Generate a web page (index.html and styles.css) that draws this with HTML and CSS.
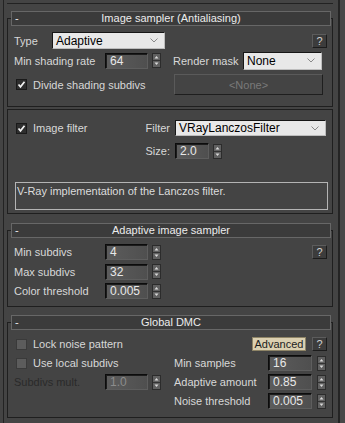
FILE: index.html
```html
<!DOCTYPE html>
<html lang="en">

<head>
    <meta charset="UTF-8">
    <title>V-Ray Sampler Settings</title>
    <link rel="stylesheet" href="styles.css">
</head>

<body>
    <div class="window">
        <div class="panels">
            <div class="stub"></div>

            <!-- Image sampler -->
            <section class="rollout r1">
                <div class="rollout-head"><span class="minus">-</span><span class="title">Image sampler (Antialiasing)</span><span class="minus"></span></div>
                <div class="body b1">
                    <div class="row row-a">
                        <span class="label lbl-type">Type</span>
                        <div class="select sel-type"><span>Adaptive</span><svg class="chev" width="8" height="5" viewBox="0 0 8 5"><path d="M0.5 0.5 L4 4 L7.5 0.5" fill="none" stroke="#8a8a8a" stroke-width="1"/></svg></div>
                        <button class="help">?</button>
                    </div>
                    <div class="row row-b">
                        <span class="label lbl-main">Min shading rate</span>
                        <div class="spin">
                            <div class="spin-input">64</div>
                            <svg class="spin-arrows" width="9" height="15" viewBox="0 0 9 15"><rect x="0.5" y="0.5" width="8" height="14" fill="#606060" stroke="#2c2c2c"/><line x1="1" y1="7.5" x2="8" y2="7.5" stroke="#333"/><path d="M2.5 5.5 L4.5 3 L6.5 5.5 Z" fill="#dadada"/><path d="M2.5 9.5 L4.5 12 L6.5 9.5 Z" fill="#dadada"/></svg>
                        </div>
                        <span class="label lbl-mask">Render mask</span>
                        <div class="select sel-mask"><span>None</span><svg class="chev" width="8" height="5" viewBox="0 0 8 5"><path d="M0.5 0.5 L4 4 L7.5 0.5" fill="none" stroke="#8a8a8a" stroke-width="1"/></svg></div>
                    </div>
                    <div class="row row-c">
                        <label class="check-group cg-wide">
                            <svg class="check" width="11" height="11" viewBox="0 0 11 11"><rect x="0.5" y="0.5" width="10" height="10" fill="#2e2e2e" stroke="#1a1a1a"/><path d="M2.5 5.5 L4.5 7.8 L8.5 2.8" fill="none" stroke="#f2f2f2" stroke-width="1.7"/></svg>
                            <span>Divide shading subdivs</span>
                        </label>
                        <button class="none-btn">&lt;None&gt;</button>
                    </div>
                </div>
            </section>

            <!-- Image filter -->
            <section class="rollout r-filter">
                <div class="body b-filter">
                    <div class="row row-16">
                        <div class="filter-left">
                            <label class="check-group">
                                <svg class="check" width="11" height="11" viewBox="0 0 11 11"><rect x="0.5" y="0.5" width="10" height="10" fill="#2e2e2e" stroke="#1a1a1a"/><path d="M2.5 5.5 L4.5 7.8 L8.5 2.8" fill="none" stroke="#f2f2f2" stroke-width="1.7"/></svg>
                                <span>Image filter</span>
                            </label>
                            <span class="label">Filter</span>
                        </div>
                        <div class="select sel-filter"><span>VRayLanczosFilter</span><svg class="chev" width="8" height="5" viewBox="0 0 8 5"><path d="M0.5 0.5 L4 4 L7.5 0.5" fill="none" stroke="#8a8a8a" stroke-width="1"/></svg></div>
                    </div>
                    <div class="row row-16 row-size">
                        <div class="filter-left right">
                            <span class="label">Size:</span>
                        </div>
                        <div class="spin spin-size">
                            <div class="spin-input narrow">2.0</div>
                            <svg class="spin-arrows" width="9" height="15" viewBox="0 0 9 15"><rect x="0.5" y="0.5" width="8" height="14" fill="#606060" stroke="#2c2c2c"/><line x1="1" y1="7.5" x2="8" y2="7.5" stroke="#333"/><path d="M2.5 5.5 L4.5 3 L6.5 5.5 Z" fill="#dadada"/><path d="M2.5 9.5 L4.5 12 L6.5 9.5 Z" fill="#dadada"/></svg>
                        </div>
                    </div>
                    <div class="desc">V-Ray implementation of the Lanczos filter.</div>
                </div>
            </section>

            <!-- Adaptive image sampler -->
            <section class="rollout r2">
                <div class="rollout-head"><span class="minus">-</span><span class="title">Adaptive image sampler</span><span class="minus"></span></div>
                <div class="body b2">
                    <div class="row row-16">
                        <span class="label lbl-main">Min subdivs</span>
                        <div class="spin">
                            <div class="spin-input">4</div>
                            <svg class="spin-arrows" width="9" height="15" viewBox="0 0 9 15"><rect x="0.5" y="0.5" width="8" height="14" fill="#606060" stroke="#2c2c2c"/><line x1="1" y1="7.5" x2="8" y2="7.5" stroke="#333"/><path d="M2.5 5.5 L4.5 3 L6.5 5.5 Z" fill="#dadada"/><path d="M2.5 9.5 L4.5 12 L6.5 9.5 Z" fill="#dadada"/></svg>
                        </div>
                        <button class="help">?</button>
                    </div>
                    <div class="row row-16">
                        <span class="label lbl-main">Max subdivs</span>
                        <div class="spin">
                            <div class="spin-input">32</div>
                            <svg class="spin-arrows" width="9" height="15" viewBox="0 0 9 15"><rect x="0.5" y="0.5" width="8" height="14" fill="#606060" stroke="#2c2c2c"/><line x1="1" y1="7.5" x2="8" y2="7.5" stroke="#333"/><path d="M2.5 5.5 L4.5 3 L6.5 5.5 Z" fill="#dadada"/><path d="M2.5 9.5 L4.5 12 L6.5 9.5 Z" fill="#dadada"/></svg>
                        </div>
                    </div>
                    <div class="row row-16">
                        <span class="label lbl-main">Color threshold</span>
                        <div class="spin">
                            <div class="spin-input">0.005</div>
                            <svg class="spin-arrows" width="9" height="15" viewBox="0 0 9 15"><rect x="0.5" y="0.5" width="8" height="14" fill="#606060" stroke="#2c2c2c"/><line x1="1" y1="7.5" x2="8" y2="7.5" stroke="#333"/><path d="M2.5 5.5 L4.5 3 L6.5 5.5 Z" fill="#dadada"/><path d="M2.5 9.5 L4.5 12 L6.5 9.5 Z" fill="#dadada"/></svg>
                        </div>
                    </div>
                </div>
            </section>

            <!-- Global DMC -->
            <section class="rollout r3">
                <div class="rollout-head"><span class="minus">-</span><span class="title">Global DMC</span><span class="minus"></span></div>
                <div class="body b3">
                    <label class="check-group">
                        <svg class="check" width="11" height="11" viewBox="0 0 11 11"><rect x="0.5" y="0.5" width="10" height="10" fill="#5c5c5c" stroke="#3a3a3a"/></svg>
                        <span>Lock noise pattern</span>
                    </label>
                    <div class="cell end">
                        <button class="adv-btn">Advanced</button>
                        <button class="help">?</button>
                    </div>

                    <label class="check-group">
                        <svg class="check" width="11" height="11" viewBox="0 0 11 11"><rect x="0.5" y="0.5" width="10" height="10" fill="#5c5c5c" stroke="#3a3a3a"/></svg>
                        <span>Use local subdivs</span>
                    </label>
                    <div class="cell">
                        <span class="label lbl-right">Min samples</span>
                        <div class="spin">
                            <div class="spin-input wide">16</div>
                            <svg class="spin-arrows gap5" width="9" height="15" viewBox="0 0 9 15"><rect x="0.5" y="0.5" width="8" height="14" fill="#606060" stroke="#2c2c2c"/><line x1="1" y1="7.5" x2="8" y2="7.5" stroke="#333"/><path d="M2.5 5.5 L4.5 3 L6.5 5.5 Z" fill="#dadada"/><path d="M2.5 9.5 L4.5 12 L6.5 9.5 Z" fill="#dadada"/></svg>
                        </div>
                    </div>

                    <div class="cell">
                        <span class="label lbl-main disabled">Subdivs mult.</span>
                        <div class="spin">
                            <div class="spin-input dim">1.0</div>
                            <svg class="spin-arrows" width="9" height="15" viewBox="0 0 9 15"><rect x="0.5" y="0.5" width="8" height="14" fill="#606060" stroke="#2c2c2c"/><line x1="1" y1="7.5" x2="8" y2="7.5" stroke="#333"/><path d="M2.5 5.5 L4.5 3 L6.5 5.5 Z" fill="#dadada"/><path d="M2.5 9.5 L4.5 12 L6.5 9.5 Z" fill="#dadada"/></svg>
                        </div>
                    </div>
                    <div class="cell">
                        <span class="label lbl-right">Adaptive amount</span>
                        <div class="spin">
                            <div class="spin-input wide">0.85</div>
                            <svg class="spin-arrows gap5" width="9" height="15" viewBox="0 0 9 15"><rect x="0.5" y="0.5" width="8" height="14" fill="#606060" stroke="#2c2c2c"/><line x1="1" y1="7.5" x2="8" y2="7.5" stroke="#333"/><path d="M2.5 5.5 L4.5 3 L6.5 5.5 Z" fill="#dadada"/><path d="M2.5 9.5 L4.5 12 L6.5 9.5 Z" fill="#dadada"/></svg>
                        </div>
                    </div>

                    <div class="cell"></div>
                    <div class="cell">
                        <span class="label lbl-right">Noise threshold</span>
                        <div class="spin">
                            <div class="spin-input wide">0.005</div>
                            <svg class="spin-arrows gap5" width="9" height="15" viewBox="0 0 9 15"><rect x="0.5" y="0.5" width="8" height="14" fill="#606060" stroke="#2c2c2c"/><line x1="1" y1="7.5" x2="8" y2="7.5" stroke="#333"/><path d="M2.5 5.5 L4.5 3 L6.5 5.5 Z" fill="#dadada"/><path d="M2.5 9.5 L4.5 12 L6.5 9.5 Z" fill="#dadada"/></svg>
                        </div>
                    </div>
                </div>
            </section>
        </div>
        <div class="scroll"></div>
    </div>
</body>

</html>
```

FILE: styles.css
```css
* {
    margin: 0;
    padding: 0;
    box-sizing: border-box;
}

html,
body {
    width: 345px;
    height: 423px;
    overflow: hidden;
    background-color: #444;
}

body {
    font-family: "Liberation Sans", Arial, sans-serif;
    font-size: 11px;
    color: #d8d8d8;
}

button {
    font-family: inherit;
    font-size: 11px;
}

.window {
    display: flex;
    height: 423px;
}

.panels {
    width: 335px;
    margin-left: 3px;
    padding: 0 5px 0 3px;
    border-left: 1px solid #232323;
}

.scroll {
    flex: 1;
    border-left: 2px solid #242424;
    background-color: #484848;
}

.stub {
    height: 4px;
    border-bottom: 1px solid #222;
}

/* rollouts */
.rollout {
    width: 326px;
    border: 1px solid #1f1f1f;
}

.r1 {
    margin-top: 14px;
}

.r-filter {
    margin-top: 2px;
}

.r2 {
    margin-top: 16px;
}

.r3 {
    margin-top: 15px;
}

.rollout-head {
    display: flex;
    align-items: center;
    height: 15px;
    margin: -8px 1px 0 3px;
    border: 1px solid #676767;
    background-color: #3b3b3b;
    color: #ececec;
    line-height: 13px;
}

.rollout-head .minus {
    width: 12px;
    padding-left: 3px;
}

.rollout-head .title {
    flex: 1;
    text-align: center;
}

.body {
    padding: 6px 5px 0 6px;
}

.b1 {
    padding-bottom: 11px;
}

.b-filter {
    padding-top: 10px;
    padding-bottom: 3px;
}

.b2 {
    display: flex;
    flex-direction: column;
    gap: 3.5px;
    padding-bottom: 7px;
}

.b3 {
    display: grid;
    grid-template-columns: 160px 1fr;
    grid-auto-rows: 16px;
    row-gap: 3px;
    padding-bottom: 8px;
}

/* rows */
.row {
    display: flex;
    align-items: center;
}

.row-a {
    height: 17px;
}

.row-b {
    height: 19px;
    margin-top: 2px;
}

.row-c {
    height: 21px;
    margin-top: 4px;
}

.row-16 {
    height: 16px;
}

.row-size {
    margin-top: 7px;
}

.cell {
    display: flex;
    align-items: center;
}

.cell.end {
    justify-content: flex-end;
}

/* labels */
.label {
    white-space: nowrap;
}

.lbl-type {
    width: 38px;
}

.lbl-main {
    width: 91px;
}

.lbl-mask {
    width: 70px;
    margin-left: 12px;
}

.lbl-right {
    width: 94px;
}

.disabled {
    color: #2a2a2a;
}

/* checkbox */
.check-group {
    display: flex;
    align-items: center;
    white-space: nowrap;
}

.cg-wide {
    width: 160px;
}

.check {
    flex-shrink: 0;
    margin: 0 6px 0 2px;
}

/* select */
.select {
    display: flex;
    align-items: center;
    justify-content: space-between;
    padding: 0 6px 0 3px;
    background-color: #e8e8e8;
    border: 1px solid;
    border-color: #161616 #bdbdbd #bdbdbd #161616;
    color: #000;
    font-size: 12px;
}

.sel-type {
    width: 113px;
    height: 17px;
}

.sel-mask {
    width: 79px;
    height: 18px;
}

.sel-filter {
    width: 151px;
    height: 16px;
    margin-left: 5px;
}

/* spinner */
.spin {
    display: flex;
    align-items: center;
}

.spin-input {
    width: 43px;
    height: 16px;
    padding-left: 4px;
    background: linear-gradient(to right, #5c5c5c, #4f4f4f);
    border: 1px solid;
    border-color: #0c0c0c #5e5e5e #5e5e5e #0c0c0c;
    box-shadow: inset 1px 1px 0 #1c1c1c;
    color: #e8e8e8;
    font-size: 12px;
    line-height: 14px;
}

.spin-input.narrow {
    width: 34px;
}

.spin-input.wide {
    width: 44px;
}

.spin-input.dim {
    color: #8c8c8c;
}

.spin-arrows {
    margin-left: 4px;
}

.spin-arrows.gap5 {
    margin-left: 5px;
}

.spin-size {
    margin-left: 5px;
}

/* buttons */
.help {
    width: 15px;
    height: 14px;
    margin-left: auto;
    background-color: #3c3c3c;
    border: 1px solid;
    border-color: #5c5c5c #1c1c1c #1c1c1c #5c5c5c;
    color: #d0d0d0;
    line-height: 12px;
}

.cell.end .help {
    margin-left: 6px;
}

.none-btn {
    width: 149px;
    height: 21px;
    background-color: #444;
    border: 1px solid;
    border-color: #5a5a5a #1e1e1e #1e1e1e #5a5a5a;
    color: #7a7a7a;
}

.adv-btn {
    width: 54px;
    height: 14px;
    background-color: #dbd0b1;
    border: 1px solid #8e8466;
    color: #1c1c1c;
    font-size: 11px;
    line-height: 12px;
}

/* filter panel */
.filter-left {
    width: 156px;
    display: flex;
    align-items: center;
    justify-content: space-between;
}

.filter-left.right {
    justify-content: flex-end;
}

.desc {
    width: 313px;
    height: 28px;
    margin: 23px 0 0 1px;
    padding: 2px 1px;
    border: 1px solid #b4b4b4;
    color: #dcdcdc;
}
```
